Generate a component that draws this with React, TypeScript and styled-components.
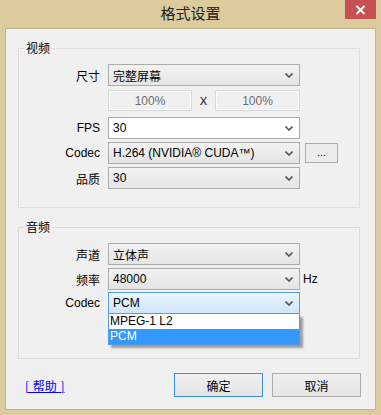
import styled, { createGlobalStyle, css } from "styled-components";

const GlobalStyle = createGlobalStyle`
  html, body {
    margin: 0;
    padding: 0;
    background: #dccb9d;
  }
  body {
    font-family: "Liberation Sans", "Noto Sans CJK SC", sans-serif;
    font-size: 12px;
    color: #000;
  }
`;

const App = () => {
  return (
    <Window>
      <GlobalStyle />
      <TitleBar>
        <span />
        <Title>格式设置</Title>
        <CloseButton>
          <svg width="11" height="10" viewBox="0 0 11 10">
            <path d="M1.5 1 L9.5 9 M9.5 1 L1.5 9" stroke="#fff" strokeWidth="2" />
          </svg>
        </CloseButton>
      </TitleBar>

      <Client>
        <Group>
          <Legend>视频</Legend>
          <Row>
            <Label>尺寸</Label>
            <Combo>
              完整屏幕
              <Chevron />
            </Combo>
          </Row>
          <Row $top={4}>
            <span />
            <SizePair>
              <EditBox $w={84}>100%</EditBox>
              <Times>X</Times>
              <EditBox $w={85}>100%</EditBox>
            </SizePair>
          </Row>
          <Row $top={6}>
            <Label>FPS</Label>
            <Combo $editable>
              30
              <Chevron />
            </Combo>
          </Row>
          <Row>
            <Label>Codec</Label>
            <Combo>
              H.264 (NVIDIA® CUDA™)
              <Chevron />
            </Combo>
            <SmallButton>...</SmallButton>
          </Row>
          <Row>
            <Label>品质</Label>
            <Combo>
              30
              <Chevron />
            </Combo>
          </Row>
        </Group>

        <Group $audio>
          <Legend>音频</Legend>
          <Row>
            <Label>声道</Label>
            <Combo>
              立体声
              <Chevron />
            </Combo>
          </Row>
          <Row $top={3}>
            <Label>频率</Label>
            <Combo>
              48000
              <Chevron />
            </Combo>
            <Unit>Hz</Unit>
          </Row>
          <Row $top={2}>
            <Label>Codec</Label>
            <ComboWrap>
              <Combo $open>
                PCM
                <Chevron />
              </Combo>
              <DropList>
                <Option>MPEG-1 L2</Option>
                <Option $selected>PCM</Option>
              </DropList>
            </ComboWrap>
          </Row>
        </Group>

        <Footer>
          <HelpLink href="#">[ 帮助 ]</HelpLink>
          <Buttons>
            <DialogButton $default>确定</DialogButton>
            <DialogButton>取消</DialogButton>
          </Buttons>
        </Footer>
      </Client>
    </Window>
  );
};

export default App;

const Chevron = () => (
  <ChevronIcon width="8" height="5" viewBox="0 0 8 5">
    <path d="M0.5 0.5 L4 4 L7.5 0.5" stroke="#555" strokeWidth="1.6" fill="none" />
  </ChevronIcon>
);

const Window = styled.div`
  width: 381px;
  height: 415px;
  display: flex;
  flex-direction: column;
  background: #dccb9d;
  box-sizing: border-box;
`;

const TitleBar = styled.div`
  height: 28px;
  display: grid;
  grid-template-columns: 1fr auto 1fr;
  align-items: start;
`;

const Title = styled.div`
  font-family: "Noto Sans CJK SC", sans-serif;
  font-size: 15px;
  line-height: 26px;
  color: #222;
`;

const CloseButton = styled.div`
  justify-self: end;
  margin-right: 5px;
  width: 31px;
  height: 19px;
  background: #c75050;
  display: flex;
  align-items: center;
  justify-content: center;
`;

const Client = styled.div`
  flex: 1;
  margin: 0 5px 5px 5px;
  border: 1px solid #c2b48d;
  background: #f0f0f0;
  padding: 12px 15px 0 12px;
  display: flex;
  flex-direction: column;
`;

const Group = styled.fieldset<{ $audio?: boolean }>`
  margin: ${(p) => (p.$audio ? "12px" : "0")} 0 0 0;
  padding: 9px 0 ${(p) => (p.$audio ? "44px" : "18px")} 0;
  border: 1px solid #dcdcdc;
  min-width: 0;
`;

const Legend = styled.legend`
  font-family: "Noto Sans CJK SC", sans-serif;
  font-size: 12px;
  line-height: 14px;
  padding: 0 2px;
  margin-left: 5px;
  color: #000;
`;

const Row = styled.div<{ $top?: number }>`
  display: grid;
  grid-template-columns: 81px 192px auto;
  column-gap: 8px;
  align-items: center;
  margin-top: ${(p) => p.$top ?? 3}px;

  &:first-of-type {
    margin-top: 0;
  }
`;

const Label = styled.div`
  text-align: right;
  font-family: "Liberation Sans", "Noto Sans CJK SC", sans-serif;
  font-size: 12px;
`;

const comboOpen = css`
  border-color: #569de5;
  background: linear-gradient(#ecf4fc, #cfe5fa);
`;

const Combo = styled.div<{ $editable?: boolean; $open?: boolean }>`
  box-sizing: border-box;
  height: 22px;
  border: 1px solid #acacac;
  background: ${(p) => (p.$editable ? "#fff" : "linear-gradient(#f2f2f2, #e5e5e5)")};
  display: flex;
  align-items: center;
  padding: 0 0 0 4px;
  font-family: "Liberation Sans", "Noto Sans CJK SC", sans-serif;
  font-size: 12px;
  white-space: nowrap;
  ${(p) => p.$open && comboOpen}
`;

const ChevronIcon = styled.svg`
  margin-left: auto;
  margin-right: 6px;
`;

const SizePair = styled.div`
  display: flex;
  align-items: center;
  justify-content: space-between;
`;

const EditBox = styled.div<{ $w: number }>`
  box-sizing: border-box;
  width: ${(p) => p.$w}px;
  height: 21px;
  border: 1px solid #d9d9d9;
  box-shadow: inset 0 0 0 1px #fbfbfb;
  background: #f0f0f0;
  color: #6d6d6d;
  display: flex;
  align-items: center;
  justify-content: center;
  font-size: 12px;
`;

const Times = styled.span`
  font-size: 11px;
  color: #000;
`;

const SmallButton = styled.div`
  box-sizing: border-box;
  width: 33px;
  height: 20px;
  margin-left: -3px;
  border: 1px solid #acacac;
  background: #ececec;
  display: flex;
  align-items: center;
  justify-content: center;
  font-size: 11px;
  padding-bottom: 3px;
`;

const Unit = styled.span`
  margin-left: -5px;
  font-size: 12px;
`;

const ComboWrap = styled.div`
  position: relative;
`;

const DropList = styled.div`
  position: absolute;
  left: 0;
  right: 0;
  top: 22px;
  box-sizing: border-box;
  border: 1px solid #569de5;
  border-top: none;
  background: #fff;
  box-shadow: 3px 3px 2px rgba(0, 0, 0, 0.35);
  z-index: 2;
`;

const Option = styled.div<{ $selected?: boolean }>`
  height: 15px;
  line-height: 15px;
  padding-left: 1px;
  font-size: 12px;
  background: ${(p) => (p.$selected ? "#3399ff" : "#fff")};
  color: ${(p) => (p.$selected ? "#fff" : "#000")};
`;

const Footer = styled.div`
  display: flex;
  align-items: center;
  justify-content: space-between;
  margin-top: 14px;
  padding-left: 7px;
`;

const HelpLink = styled.a`
  color: #0000ff;
  font-family: "Noto Sans CJK SC", sans-serif;
  font-size: 12px;
  text-decoration: underline;
  word-spacing: 1px;
`;

const Buttons = styled.div`
  display: flex;
  gap: 9px;
  margin-right: -1px;
`;

const DialogButton = styled.div<{ $default?: boolean }>`
  box-sizing: border-box;
  width: 89px;
  height: 24px;
  border: 1px solid ${(p) => (p.$default ? "#3c8fdf" : "#acacac")};
  background: linear-gradient(#f0f0f0, #e5e5e5);
  display: flex;
  align-items: center;
  justify-content: center;
  font-family: "Noto Sans CJK SC", sans-serif;
  font-size: 12px;
`;
